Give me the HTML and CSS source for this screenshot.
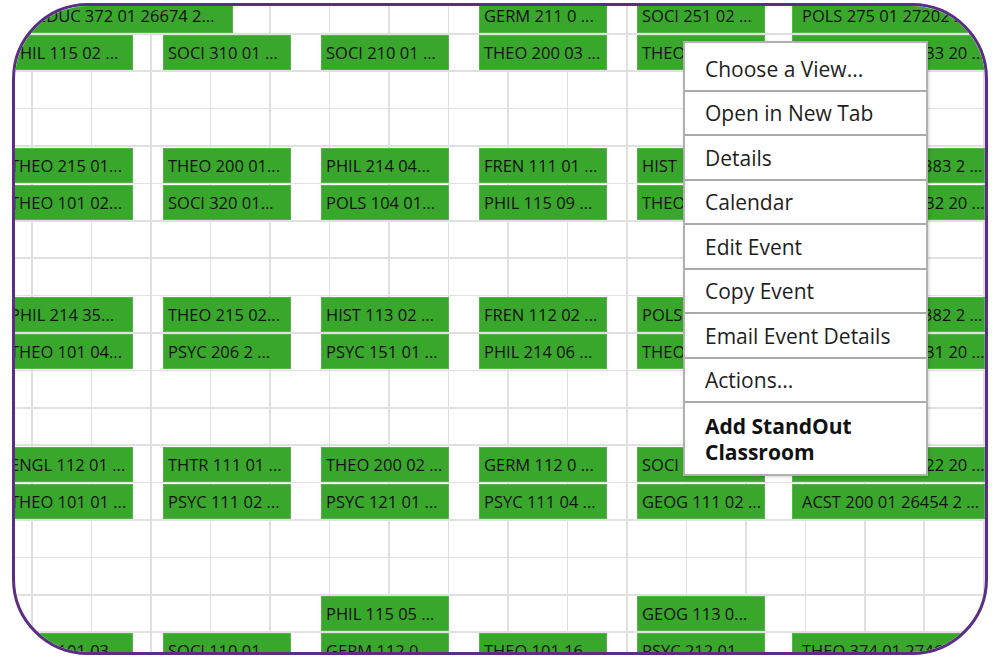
FILE: index.html
```html
<!DOCTYPE html>
<html>
<head>
<meta charset="utf-8">
<link rel="stylesheet" href="styles.css">
</head>
<body>
<div class="screen">
  <div class="frame">
    <div class="cal">
      <div class="slot">
        <div class="row">
          <div class="ev c12 wide">EDUC 372 01 26674 2...</div>
          <div class="ev c4">GERM 211 0 ...</div>
          <div class="ev c5">SOCI 251 02 ...</div>
          <div class="ev c6">POLS 275 01 27202 2 ...</div>
        </div>
        <div class="row">
          <div class="ev c1">PHIL 115 02 ...</div>
          <div class="ev c2">SOCI 310 01 ...</div>
          <div class="ev c3">SOCI 210 01 ...</div>
          <div class="ev c4">THEO 200 03 ...</div>
          <div class="ev c5">THEO 233 01 ...</div>
          <div class="ev c6">HIST 233 01 27833 20 ...</div>
        </div>
      </div>
      <div class="slot">
        <div class="row">
          <div class="ev c1">THEO 215 01...</div>
          <div class="ev c2">THEO 200 01...</div>
          <div class="ev c3">PHIL 214 04...</div>
          <div class="ev c4">FREN 111 01 ...</div>
          <div class="ev c5">HIST 101 01 ...</div>
          <div class="ev c6">ENGL 383 01 27383 2 ...</div>
        </div>
        <div class="row">
          <div class="ev c1">THEO 101 02...</div>
          <div class="ev c2">SOCI 320 01...</div>
          <div class="ev c3">POLS 104 01...</div>
          <div class="ev c4">PHIL 115 09 ...</div>
          <div class="ev c5">THEO 101 05 ...</div>
          <div class="ev c6">HIST 232 01 26832 20 ...</div>
        </div>
      </div>
      <div class="slot">
        <div class="row">
          <div class="ev c1">PHIL 214 35...</div>
          <div class="ev c2">THEO 215 02...</div>
          <div class="ev c3">HIST 113 02 ...</div>
          <div class="ev c4">FREN 112 02 ...</div>
          <div class="ev c5">POLS 201 01 ...</div>
          <div class="ev c6">ENGL 382 01 27382 2 ...</div>
        </div>
        <div class="row">
          <div class="ev c1">THEO 101 04...</div>
          <div class="ev c2">PSYC 206 2 ...</div>
          <div class="ev c3">PSYC 151 01 ...</div>
          <div class="ev c4">PHIL 214 06 ...</div>
          <div class="ev c5">THEO 101 07 ...</div>
          <div class="ev c6">HIST 231 01 26831 20 ...</div>
        </div>
      </div>
      <div class="slot">
        <div class="row">
          <div class="ev c1">ENGL 112 01 ...</div>
          <div class="ev c2">THTR 111 01 ...</div>
          <div class="ev c3">THEO 200 02 ...</div>
          <div class="ev c4">GERM 112 0 ...</div>
          <div class="ev c5">SOCI 101 01 ...</div>
          <div class="ev c6">HIST 222 01 26822 20 ...</div>
        </div>
        <div class="row">
          <div class="ev c1">THEO 101 01 ...</div>
          <div class="ev c2">PSYC 111 02 ...</div>
          <div class="ev c3">PSYC 121 01 ...</div>
          <div class="ev c4">PSYC 111 04 ...</div>
          <div class="ev c5">GEOG 111 02 ...</div>
          <div class="ev c6">ACST 200 01 26454 2 ...</div>
        </div>
      </div>
      <div class="slot">
        <div class="row">
          <div class="ev c3">PHIL 115 05 ...</div>
          <div class="ev c5">GEOG 113 0...</div>
        </div>
        <div class="row">
          <div class="ev c1">THEO 101 03 ...</div>
          <div class="ev c2">SOCI 110 01 ...</div>
          <div class="ev c3">GERM 112 0...</div>
          <div class="ev c4">THEO 101 16 ...</div>
          <div class="ev c5">PSYC 212 01 ...</div>
          <div class="ev c6">THEO 374 01 27461 2 ...</div>
        </div>
      </div>
    </div>
  </div>

  <ul class="menu">
    <li>Choose a View...</li>
    <li>Open in New Tab</li>
    <li>Details</li>
    <li>Calendar</li>
    <li>Edit Event</li>
    <li>Copy Event</li>
    <li>Email Event Details</li>
    <li>Actions...</li>
    <li class="strong">Add StandOut Classroom</li>
  </ul>
</div>
</body>
</html>
```

FILE: styles.css
```css
html, body {
  margin: 0;
  padding: 0;
  background: #ffffff;
}

body {
  font-family: "Open Sans", "Noto Sans", "Liberation Sans", sans-serif;
  width: 1000px;
  height: 659px;
  overflow: hidden;
}

.screen {
  position: relative;
  width: 1000px;
  height: 659px;
  padding-top: 3px;
  box-sizing: border-box;
}

.frame {
  margin-left: 12px;
  width: 976px;
  height: 652px;
  box-sizing: border-box;
  border: 3px solid #5b2d84;
  border-radius: 76px;
  overflow: hidden;
  background-color: #ffffff;
  background-image:
    repeating-linear-gradient(to right, transparent 0 16.4px, #e0e0e0 16.4px 18px, transparent 18px 59.47px),
    repeating-linear-gradient(to bottom, transparent 0 27px, #e0e0e0 27px 28.6px, transparent 28.6px 37.4px);
}

.cal {
  margin: -8px 0 0 -10px;
  width: 980px;
}

.slot {
  height: 149.5px;
  display: flex;
  flex-direction: column;
  gap: 2px;
}

.row {
  display: grid;
  grid-template-columns: 128px 128px 128px 128px 128px 1fr;
  grid-template-rows: 35px;
  column-gap: 30px;
}

.ev {
  box-sizing: border-box;
  height: 35px;
  background: #39a72b;
  border: 1px solid #55b447;
  padding: 0 4px;
  color: #111111;
  font-size: 16.5px;
  line-height: 33px;
  white-space: nowrap;
  overflow: hidden;
}

.row > .ev { grid-row: 1; }

.c1 { grid-column: 1; }
.c2 { grid-column: 2; }
.c3 { grid-column: 3; }
.c4 { grid-column: 4; }
.c5 { grid-column: 5; }
.c12 { grid-column: 1 / 3; }
.ev.c6 { grid-column: 6; margin-left: -3px; padding-left: 9px; }

.ev.wide {
  justify-self: start;
  width: 206px;
  margin-left: 22px;
  padding-left: 9px;
}

.menu {
  position: absolute;
  left: 683px;
  top: 41px;
  width: 245px;
  box-sizing: border-box;
  margin: 0;
  padding: 4px 0 0;
  list-style: none;
  background: #ffffff;
  border: 2px solid #b0b0b0;
  box-shadow: 1px 1px 3px rgba(0, 0, 0, 0.18);
  color: #1e1e1e;
  font-size: 21px;
}

.menu li {
  padding: 8.5px 18px 8px 20px;
  line-height: 26px;
  border-bottom: 2px solid #a9a9a9;
  white-space: nowrap;
}

.menu li.strong {
  border-bottom: none;
  white-space: normal;
  font-weight: 700;
  padding: 9.5px 18px 9.5px 20px;
  line-height: 26px;
  color: #111111;
}
```
